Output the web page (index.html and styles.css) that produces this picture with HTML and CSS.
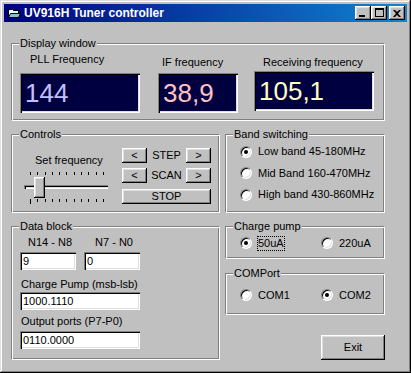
FILE: index.html
```html
<!DOCTYPE html>
<html>

<head>
    <title>UV916H Tuner controller</title>
    <link rel="stylesheet" href="styles.css">
</head>

<body>
    <div class="window">
        <div class="titlebar">
            <svg class="app-icon" viewBox="0 0 16 16" width="16" height="16">
                <path d="M2.5 4.5h4l1 1h5v7h-10z" fill="#e8ffff" stroke="#000" />
                <path d="M4.5 8.5h10l-2 4h-10z" fill="#7fc8c8" stroke="#000" />
            </svg>
            <span class="title">UV916H Tuner controller</span>
            <div class="caption-btns">
                <div class="cbtn"><span class="g-min"></span></div>
                <div class="cbtn"><span class="g-max"></span></div>
                <div class="cbtn close">
                    <svg viewBox="0 0 8 7" width="8" height="7">
                        <path d="M0 0h2l2 2 2-2h2L5 3.5 8 7H6L4 5 2 7H0l3-3.5z" fill="#000" />
                    </svg>
                </div>
            </div>
        </div>

        <div class="client">
            <div class="group display">
                <span class="cap">Display window</span>
                <div class="readout pll">
                    <span class="rlabel">PLL Frequency</span>
                    <div class="lcd lav">144</div>
                </div>
                <div class="readout ifq">
                    <span class="rlabel">IF frequency</span>
                    <div class="lcd pink">38,9</div>
                </div>
                <div class="readout recv">
                    <span class="rlabel">Receiving frequency</span>
                    <div class="lcd yellow">105,1</div>
                </div>
            </div>

            <div class="lower">
                <div class="group controls">
                    <span class="cap">Controls</span>
                    <div class="freq">
                        <span class="flabel">Set frequency</span>
                        <div class="slider">
                            <div class="ticks">
                                <span></span><span></span><span></span><span></span><span></span><span></span>
                                <span></span><span></span><span></span><span></span><span></span>
                            </div>
                            <div class="track"></div>
                            <div class="ticks bottom">
                                <span></span><span></span><span></span><span></span><span></span><span></span>
                                <span></span><span></span><span></span><span></span><span></span>
                            </div>
                            <div class="thumb"></div>
                        </div>
                    </div>
                    <div class="nav">
                        <div class="btn">&lt;</div>
                        <span class="navlabel">STEP</span>
                        <div class="btn">&gt;</div>
                        <div class="btn">&lt;</div>
                        <span class="navlabel">SCAN</span>
                        <div class="btn">&gt;</div>
                        <div class="btn stop">STOP</div>
                    </div>
                </div>

                <div class="group band">
                    <span class="cap">Band switching</span>
                    <div class="opt"><span class="radio on"></span>Low band 45-180MHz</div>
                    <div class="opt"><span class="radio"></span>Mid Band 160-470MHz</div>
                    <div class="opt"><span class="radio"></span>High band 430-860MHz</div>
                </div>

                <div class="group data">
                    <span class="cap">Data block</span>
                    <div class="pair">
                        <span class="nlabel">N14 - N8</span>
                        <span class="nlabel">N7 - N0</span>
                        <div class="textbox">9</div>
                        <div class="textbox">0</div>
                    </div>
                    <span class="dlabel cp">Charge Pump (msb-lsb)</span>
                    <div class="textbox wide">1000.1110</div>
                    <span class="dlabel op">Output ports (P7-P0)</span>
                    <div class="textbox wide">0110.0000</div>
                </div>

                <div class="right-col">
                    <div class="group charge">
                        <span class="cap">Charge pump</span>
                        <div class="opts">
                            <div class="opt first"><span class="radio on"></span><span class="focus">50uA</span></div>
                            <div class="opt"><span class="radio"></span>220uA</div>
                        </div>
                    </div>
                    <div class="group com">
                        <span class="cap">COMPort</span>
                        <div class="opts">
                            <div class="opt first"><span class="radio"></span>COM1</div>
                            <div class="opt"><span class="radio on"></span>COM2</div>
                        </div>
                    </div>
                    <div class="btn exit">Exit</div>
                </div>
            </div>
        </div>
    </div>
</body>

</html>
```

FILE: styles.css
```css
* {
    box-sizing: border-box;
}

body {
    margin: 0;
    font-family: "Liberation Sans", Arial, sans-serif;
    font-size: 11px;
    line-height: 13px;
    color: #000;
    background: #c0c0c0;
}

.window {
    width: 411px;
    height: 373px;
    padding: 4px;
    background: #c0c0c0;
    box-shadow: inset -1px -1px #000, inset 1px 1px #dfdfdf, inset -2px -2px #808080, inset 2px 2px #fff;
}

/* title bar */
.titlebar {
    height: 18px;
    display: flex;
    align-items: center;
    padding: 0 2px;
    background: linear-gradient(to right, #000080, #1084d0);
    color: #fff;
}

.app-icon {
    margin-right: 2px;
}

.title {
    flex: 1;
    font-weight: bold;
    font-size: 12px;
}

.caption-btns {
    display: flex;
}

.cbtn {
    width: 16px;
    height: 14px;
    position: relative;
    display: flex;
    align-items: center;
    justify-content: center;
    background: #c0c0c0;
    box-shadow: inset -1px -1px #000, inset 1px 1px #fff, inset -2px -2px #808080, inset 2px 2px #dfdfdf;
}

.cbtn.close {
    margin-left: 2px;
}

.g-min {
    width: 6px;
    height: 2px;
    background: #000;
    margin: 6px 2px 0 0;
}

.g-max {
    width: 9px;
    height: 9px;
    border: 1px solid #000;
    border-top-width: 2px;
    margin-top: -1px;
}

/* client area */
.client {
    padding: 21px 0 0 7px;
}

.group {
    position: relative;
    border: 1px solid;
    border-color: #808080 #fff #fff #808080;
    box-shadow: inset 1px 1px #fff, inset -1px -1px #808080;
}

.cap {
    position: absolute;
    top: -7px;
    left: 7px;
    padding: 0 1px;
    background: #c0c0c0;
}

/* display window */
.display {
    width: 374px;
    height: 78px;
    display: flex;
    padding-left: 8px;
}

.readout {
    display: flex;
    flex-direction: column;
}

.pll {
    width: 120px;
}

.pll .rlabel {
    margin-top: 9px;
    padding-left: 10px;
}

.pll .lcd {
    margin-top: 7px;
}

.ifq {
    width: 80px;
    margin-left: 18px;
}

.ifq .rlabel {
    margin-top: 12px;
    padding-left: 4px;
}

.ifq .lcd {
    margin-top: 4px;
}

.recv {
    width: 120px;
    margin-left: 16px;
}

.recv .rlabel {
    margin-top: 12px;
    padding-left: 9px;
}

.recv .lcd {
    margin-top: 2px;
}

.lcd {
    height: 40px;
    padding-left: 5px;
    font-size: 26px;
    line-height: 40px;
    background: #000040;
    box-shadow: inset 1px 1px #808080, inset 2px 2px #000, inset -1px -1px #fff, inset -2px -2px #dfdfdf;
}

.lav {
    color: #c0c0ff;
}

.pink {
    color: #ffc0c0;
}

.yellow {
    color: #ffffc0;
}

/* lower part */
.lower {
    margin-top: 13px;
    display: grid;
    grid-template-columns: 209px 160px;
    grid-template-rows: 79px auto;
    gap: 13px 5px;
}

.controls {
    display: flex;
    padding-left: 12px;
}

.freq {
    width: 84px;
    display: flex;
    flex-direction: column;
}

.flabel {
    margin-top: 19px;
    padding-left: 11px;
}

.slider {
    position: relative;
    margin-top: 4px;
    display: flex;
    flex-direction: column;
}

.ticks {
    width: 74px;
    height: 3px;
    margin: 1px 0 0 6px;
    display: flex;
    justify-content: space-between;
    align-items: flex-end;
}

.ticks span {
    width: 1px;
    height: 3px;
    background: #000;
}

.ticks.bottom {
    height: 5px;
    margin-top: 10px;
    align-items: flex-start;
}

.ticks.bottom span:first-child {
    height: 5px;
}

.track {
    height: 4px;
    margin-top: 10px;
    box-shadow: inset 1px 1px #808080, inset 2px 2px #000, inset -1px -1px #fff, inset -2px -2px #dfdfdf;
}

.thumb {
    position: absolute;
    top: 6px;
    left: 10px;
    width: 11px;
    height: 21px;
    background: #c0c0c0;
    box-shadow: inset -1px -1px #000, inset 1px 1px #fff, inset -2px -2px #808080, inset 2px 2px #dfdfdf;
}

.nav {
    margin: 13px 0 0 14px;
    display: grid;
    grid-template-columns: 25px 39px 25px;
    grid-template-rows: 15px 15px 15px;
    row-gap: 5px;
    align-items: center;
}

.navlabel {
    text-align: center;
}

.btn {
    height: 15px;
    display: flex;
    align-items: center;
    justify-content: center;
    background: #c0c0c0;
    box-shadow: inset -1px -1px #000, inset 1px 1px #fff, inset -2px -2px #808080, inset 2px 2px #dfdfdf;
}

.stop {
    grid-column: 1 / 4;
    margin-top: 2px;
}

/* band switching */
.band {
    padding: 10px 0 0 14px;
    display: flex;
    flex-direction: column;
    gap: 8.5px;
}

.opt {
    display: flex;
    align-items: center;
    height: 13px;
}

.radio {
    width: 12px;
    height: 12px;
    margin-right: 6px;
    position: relative;
    border-radius: 50%;
    border: 1px solid;
    border-color: #808080 #fff #fff #808080;
    box-shadow: inset 1px 1px #000, inset -1px -1px #dfdfdf;
    background: #fff;
}

.radio.on::after {
    content: "";
    position: absolute;
    left: 3px;
    top: 3px;
    width: 4px;
    height: 4px;
    border-radius: 50%;
    background: #000;
}

/* data block */
.data {
    padding: 9px 0 0 8px;
    display: flex;
    flex-direction: column;
}

.pair {
    display: grid;
    grid-template-columns: 56px 56px;
    column-gap: 8px;
    row-gap: 3px;
}

.nlabel {
    text-align: center;
    padding-left: 4px;
}

.textbox {
    height: 18px;
    padding-left: 3px;
    line-height: 18px;
    background: #fff;
    box-shadow: inset 1px 1px #808080, inset 2px 2px #000, inset -1px -1px #fff, inset -2px -2px #dfdfdf;
}

.textbox.wide {
    width: 120px;
}

.dlabel {
    padding-left: 1px;
}

.cp {
    margin: 8px 0 1px;
}

.op {
    margin: 5px 0 3px;
}

/* right column */
.right-col {
    display: flex;
    flex-direction: column;
}

.charge {
    height: 33px;
    padding: 9.5px 0 0 14px;
}

.com {
    height: 42px;
    margin-top: 14px;
    padding: 14.5px 0 0 14px;
}

.opts {
    display: flex;
}

.opt.first {
    width: 81px;
}

.focus {
    outline: 1px dotted #000;
    outline-offset: 0;
}

.exit {
    align-self: flex-end;
    width: 64px;
    height: 25px;
    margin-top: 20px;
}
```
